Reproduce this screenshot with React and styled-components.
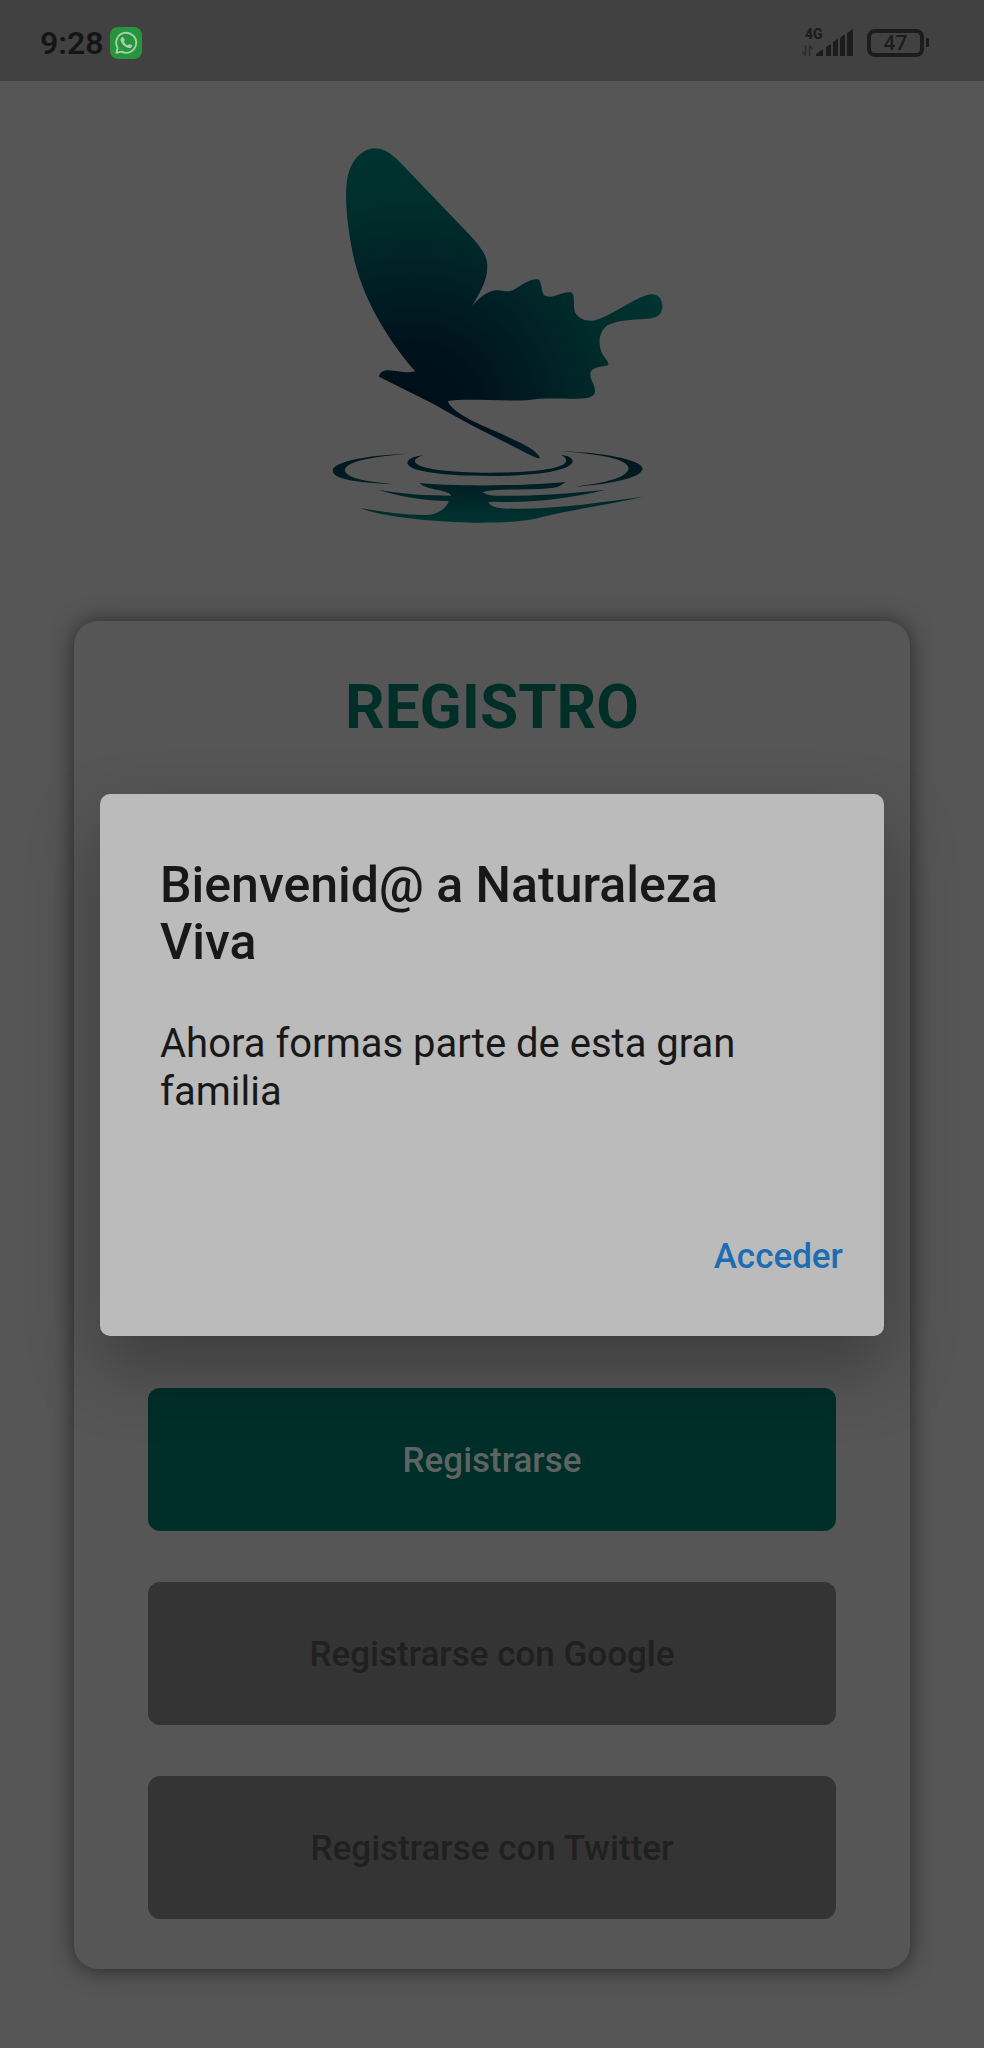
import React from "react";
import styled, { createGlobalStyle } from "styled-components";

const GlobalStyle = createGlobalStyle`
  *, *::before, *::after { box-sizing: border-box; }
  body {
    margin: 0;
    background: #565656;
    font-family: Roboto, "Liberation Sans", sans-serif;
  }
  button { font-family: inherit; cursor: pointer; }
`;

const Screen = styled.div`
  position: relative;
  display: flex;
  flex-direction: column;
  min-height: 100vh;
  background: #565656;
`;

const StatusBar = styled.header`
  display: flex;
  align-items: center;
  justify-content: space-between;
  height: 81px;
  padding: 4px 60px 0 40px;
  background: #414141;
  color: #151515;
`;

const StatusGroup = styled.div`
  display: flex;
  align-items: center;
  gap: ${({ $gap }) => $gap}px;
`;

const Clock = styled.time`
  font-size: 32px;
  line-height: 36px;
  font-weight: 600;
`;

const Battery = styled.div`
  position: relative;
  display: flex;
  align-items: center;
  justify-content: center;
  width: 57px;
  height: 28px;
  border: 4px solid #1c1c1c;
  border-radius: 8px;
  font-size: 21px;
  line-height: 24px;
  font-weight: 500;
  color: #1c1c1c;

  &::after {
    content: "";
    position: absolute;
    right: -9px;
    width: 3px;
    height: 9px;
    border-radius: 1px;
    background: #1c1c1c;
  }
`;

const Content = styled.main`
  flex: 1;
  display: flex;
  flex-direction: column;
  align-items: center;
  padding: 49px 74px 79px;
`;

const Logo = styled.svg`
  display: block;
  flex: none;
  width: 370px;
  height: 410px;
  max-width: 100%;
`;

const Card = styled.section`
  flex: 1;
  display: flex;
  flex-direction: column;
  justify-content: space-between;
  gap: 50px;
  width: 100%;
  margin-top: 81px;
  padding: 50px 74px;
  border-radius: 24px;
  background: #565656;
  box-shadow: 0 1px 22px rgba(0, 0, 0, 0.55);
`;

const CardTitle = styled.h1`
  margin: 0;
  font-size: 62px;
  line-height: 72px;
  font-weight: 700;
  text-align: center;
  color: #002f28;
`;

const Actions = styled.div`
  display: flex;
  flex-direction: column;
  gap: 51px;
`;

const ActionButton = styled.button`
  height: 143px;
  padding: 2px 0 0;
  border: 0;
  border-radius: 12px;
  background: ${({ $primary }) => ($primary ? "#002e29" : "#343434")};
  color: ${({ $primary }) => ($primary ? "#5d6462" : "#202020")};
  font-size: 35px;
  line-height: 42px;
  font-weight: 500;
`;

const Overlay = styled.div`
  position: absolute;
  inset: 81px 0 0;
  display: flex;
  align-items: center;
  justify-content: center;
  padding: 0 100px;
`;

const Dialog = styled.div`
  display: flex;
  flex-direction: column;
  width: 100%;
  padding: 63px 41px 58px 60px;
  border-radius: 10px;
  background: #bbbbbb;
  color: #181818;
  box-shadow: 0 32px 72px rgba(0, 0, 0, 0.3);
`;

const DialogTitle = styled.h2`
  margin: 0 60px 49px 0;
  font-size: 50px;
  line-height: 57px;
  font-weight: 500;
`;

const DialogText = styled.p`
  margin: 0 60px 120px 0;
  font-size: 40px;
  line-height: 48px;
`;

const DialogAction = styled.button`
  align-self: flex-end;
  padding: 0;
  border: 0;
  background: none;
  color: #1c6db2;
  font-size: 35px;
  line-height: 42px;
  font-weight: 500;
`;

function WhatsAppIcon() {
  return (
    <svg width="32" height="32" viewBox="0 0 32 32" role="img" aria-label="WhatsApp">
      <rect width="32" height="32" rx="8" fill="#27953d" />
      <path
        d="M6.3 25.9 7.6 20.9A10 10 0 1 1 11.5 24.6Z"
        fill="none"
        stroke="#a6cfae"
        strokeWidth="1.8"
        strokeLinejoin="round"
      />
      <path
        d="M12.1 10.3c.6-.4 1.3-.3 1.5.2l1.1 2.5c.2.5-.8 1.5-.8 1.7.9 1.8 2.1 2.8 3.9 3.6.4.1 1.3-1.4 1.7-1.3l2.6 1.3c.4.3.1 1.5-.6 2.1-1.7 1.4-4.5.4-6.6-1.1-2.2-1.6-4-3.9-4.4-6-.2-1.2.6-2.5 1.6-3z"
        fill="#a6cfae"
      />
    </svg>
  );
}

function SignalIcon() {
  return (
    <svg width="54" height="42" viewBox="0 -6 54 42" role="img" aria-label="4G">
      <text x="4" y="11" fontSize="14" fontWeight="800" fill="#1c1c1c">4G</text>
      <path d="M4.500 17v10M1.500 24l3 3.500M8.500 28V18M8.500 17.500l3 3.500" fill="none" stroke="#2c2c2c" strokeWidth="1.500" />
      <path
        d="M15 28v-2l7-5v7zM25 28V19l5-3v12zM32 28V14l5-3v17zM39 28V10l5-4v22zM46 28V5l6-4v27z"
        fill="#1c1c1c"
      />
    </svg>
  );
}

function ButterflyLogo() {
  return (
    <Logo viewBox="-9 0 1110 1230" role="img" aria-label="Naturaleza Viva">
      <defs>
        <radialGradient id="wing" gradientUnits="userSpaceOnUse" cx="310" cy="850" r="840">
          <stop offset="0" stopColor="#000e19" />
          <stop offset="0.25" stopColor="#00131d" />
          <stop offset="0.5" stopColor="#002025" />
          <stop offset="0.75" stopColor="#002e2c" />
          <stop offset="0.92" stopColor="#00322f" />
          <stop offset="1" stopColor="#003833" />
        </radialGradient>
        <linearGradient id="water" gradientUnits="userSpaceOnUse" x1="0" y1="960" x2="0" y2="1180">
          <stop offset="0" stopColor="#00141e" />
          <stop offset="0.5" stopColor="#002024" />
          <stop offset="1" stopColor="#003430" />
        </linearGradient>
      </defs>
      <path
        fill="url(#wing)"
        d="M316 724C240 638 166 520 134 395C112 300 102 200 112 145C124 82 164 55 195 55
           C228 56 247 74 275 102L470 305C512 350 532 374 532 410C532 456 504 496 485 530
           C506 505 530 485 556 481C578 478 585 490 610 480C635 465 660 446 683 448
           C696 451 692 480 702 496C732 510 752 482 784 487C797 495 788 530 795 547
           C808 568 828 574 850 572C905 560 970 503 1021 493C1048 490 1058 511 1057 533
           C1054 558 1036 564 1010 566C965 570 920 570 893 586C864 604 864 650 877 671
           C883 683 897 694 895 705C879 712 855 708 843 724C834 743 856 762 855 785
           C852 802 832 805 805 806C760 807 700 802 650 811C560 814 455 804 413 814
           C430 850 500 880 570 910C630 938 677 955 691 985C669 983 640 963 600 944
           C520 904 445 866 375 824L207 740C209 728 218 721 235 721C262 722 290 732 316 724Z"
      />
      <g fill="url(#water)">
        <path d="M292 971C210 973 68 990 68 1022C71 1053 165 1057 250 1063C185 1055 107 1048 105 1020C107 991 205 979 292 971Z" />
        <path d="M340 976C308 979 292 989 292 1000C296 1026 410 1038 540 1038C680 1038 786 1022 788 993C786 983 773 977 754 975C765 981 770 987 768 995C754 1020 650 1027 540 1028C420 1027 322 1017 315 995C314 987 324 981 340 976Z" />
        <path d="M752 964C875 967 995 989 998 1016C993 1046 892 1062 798 1070C885 1059 953 1043 956 1015C952 986 866 972 752 964Z" />
        <path d="M329 1059C425 1070 650 1068 768 1056C754 1065 742 1074 725 1074C650 1083 575 1073 517 1086C535 1101 575 1097 620 1097C715 1096 795 1088 885 1080C798 1101 700 1115 600 1116C565 1117 545 1113 535 1118C550 1139 600 1136 640 1136C765 1134 883 1115 998 1100C890 1125 780 1140 700 1160C630 1180 520 1180 430 1176C330 1171 222 1160 151 1135C220 1146 285 1155 340 1155C382 1156 410 1136 416 1113C345 1112 272 1101 204 1079C278 1093 350 1096 424 1097C414 1078 348 1081 329 1059Z" />
      </g>
    </Logo>
  );
}

export default function App() {
  return (
    <>
      <GlobalStyle />
      <Screen>
        <StatusBar>
          <StatusGroup $gap={6}>
            <Clock>9:28</Clock>
            <WhatsAppIcon />
          </StatusGroup>
          <StatusGroup $gap={12}>
            <SignalIcon />
            <Battery>47</Battery>
          </StatusGroup>
        </StatusBar>
        <Content>
          <ButterflyLogo />
          <Card>
            <CardTitle>REGISTRO</CardTitle>
            <Actions>
              <ActionButton type="button" $primary>Registrarse</ActionButton>
              <ActionButton type="button">Registrarse con Google</ActionButton>
              <ActionButton type="button">Registrarse con Twitter</ActionButton>
            </Actions>
          </Card>
        </Content>
        <Overlay>
          <Dialog role="dialog" aria-modal="true" aria-labelledby="welcome-title">
            <DialogTitle id="welcome-title">Bienvenid@ a Naturaleza Viva</DialogTitle>
            <DialogText>Ahora formas parte de esta gran familia</DialogText>
            <DialogAction type="button">Acceder</DialogAction>
          </Dialog>
        </Overlay>
      </Screen>
    </>
  );
}
